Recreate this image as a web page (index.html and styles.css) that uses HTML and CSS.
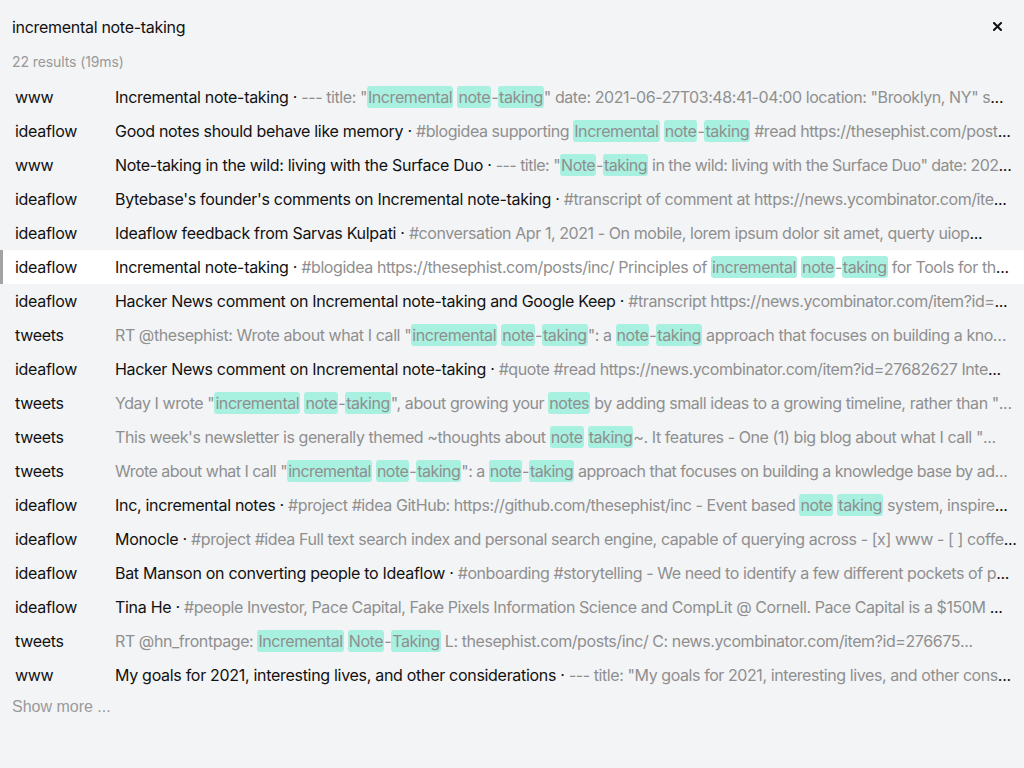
FILE: index.html
```html
<!DOCTYPE html>
<html>
<head>
<meta charset="utf-8">
<title>Search</title>
<link rel="stylesheet" href="styles.css">
</head>
<body>
<div class="search">
  <div class="search-head">
    <div class="query">incremental note-taking</div>
    <button class="close" aria-label="Close">
      <svg width="9" height="9" viewBox="0 0 9 9"><path d="M1 1L8 8M8 1L1 8" stroke="#111" stroke-width="2" stroke-linecap="square"/></svg>
    </button>
  </div>
  <div class="meta">22 results (19ms)</div>
  <ul class="results">
    <li class="row"><span class="src">www</span><span class="text"><span class="title">Incremental note-taking · </span><span class="body">--- title: "<mark>Incremental</mark> <mark>note</mark>-<mark>taking</mark>" date: 2021-06-27T03:48:41-04:00 location: "Brooklyn, NY" s</span>...</span></li>
    <li class="row"><span class="src">ideaflow</span><span class="text"><span class="title">Good notes should behave like memory · </span><span class="body">#blogidea supporting <mark>Incremental</mark> <mark>note</mark>-<mark>taking</mark> #read https://thesephist.com/post</span>...</span></li>
    <li class="row tight"><span class="src">www</span><span class="text"><span class="title">Note-taking in the wild: living with the Surface Duo · </span><span class="body">--- title: "<mark>Note</mark>-<mark>taking</mark> in the wild: living with the Surface Duo" date: 202</span>...</span></li>
    <li class="row"><span class="src">ideaflow</span><span class="text"><span class="title">Bytebase's founder's comments on Incremental note-taking · </span><span class="body">#transcript of comment at https://news.ycombinator.com/ite</span>...</span></li>
    <li class="row"><span class="src">ideaflow</span><span class="text"><span class="title">Ideaflow feedback from Sarvas Kulpati · </span><span class="body">#conversation Apr 1, 2021 - On mobile, lorem ipsum dolor sit amet, querty uiop</span>...</span></li>
    <li class="row selected"><span class="src">ideaflow</span><span class="text"><span class="title">Incremental note-taking · </span><span class="body">#blogidea https://thesephist.com/posts/inc/ Principles of <mark>incremental</mark> <mark>note</mark>-<mark>taking</mark> for Tools for th</span>...</span></li>
    <li class="row"><span class="src">ideaflow</span><span class="text"><span class="title">Hacker News comment on Incremental note-taking and Google Keep · </span><span class="body">#transcript https://news.ycombinator.com/item?id=</span>...</span></li>
    <li class="row"><span class="src">tweets</span><span class="text muted"><span class="body">RT @thesephist: Wrote about what I call "<mark>incremental</mark> <mark>note</mark>-<mark>taking</mark>": a <mark>note</mark>-<mark>taking</mark> approach that focuses on building a know</span>...</span></li>
    <li class="row"><span class="src">ideaflow</span><span class="text"><span class="title">Hacker News comment on Incremental note-taking · </span><span class="body">#quote #read https://news.ycombinator.com/item?id=27682627 Inte</span>...</span></li>
    <li class="row"><span class="src">tweets</span><span class="text muted"><span class="body">Yday I wrote "<mark>incremental</mark> <mark>note</mark>-<mark>taking</mark>", about growing your <mark>notes</mark> by adding small ideas to a growing timeline, rather than "</span>...</span></li>
    <li class="row"><span class="src">tweets</span><span class="text muted"><span class="body">This week's newsletter is generally themed ~thoughts about <mark>note</mark> <mark>taking</mark>~. It features - One (1) big blog about what I call "</span>...</span></li>
    <li class="row tight"><span class="src">tweets</span><span class="text muted"><span class="body">Wrote about what I call "<mark>incremental</mark> <mark>note</mark>-<mark>taking</mark>": a <mark>note</mark>-<mark>taking</mark> approach that focuses on building a knowledge base by ad</span>...</span></li>
    <li class="row"><span class="src">ideaflow</span><span class="text"><span class="title">Inc, incremental notes · </span><span class="body">#project #idea GitHub: https://github.com/thesephist/inc - Event based <mark>note</mark> <mark>taking</mark> system, inspire</span>...</span></li>
    <li class="row"><span class="src">ideaflow</span><span class="text"><span class="title">Monocle · </span><span class="body">#project #idea Full text search index and personal search engine, capable of querying across - [x] www - [ ] coffe</span>...</span></li>
    <li class="row"><span class="src">ideaflow</span><span class="text"><span class="title">Bat Manson on converting people to Ideaflow · </span><span class="body">#onboarding #storytelling - We need to identify a few different pockets of p</span>...</span></li>
    <li class="row"><span class="src">ideaflow</span><span class="text"><span class="title">Tina He · </span><span class="body">#people Investor, Pace Capital, Fake Pixels Information Science and CompLit @ Cornell. Pace Capital is a $150M </span>...</span></li>
    <li class="row"><span class="src">tweets</span><span class="text muted"><span class="body">RT @hn_frontpage: <mark>Incremental</mark> <mark>Note</mark>-<mark>Taking</mark> L: thesephist.com/posts/inc/ C: news.ycombinator.com/item?id=276675</span>...</span></li>
    <li class="row"><span class="src">www</span><span class="text"><span class="title">My goals for 2021, interesting lives, and other considerations · </span><span class="body">--- title: "My goals for 2021, interesting lives, and other cons</span>...</span></li>
  </ul>
  <button class="more">Show more ...</button>
</div>
</body>
</html>
```

FILE: styles.css
```css
* { box-sizing: border-box; }
html, body {
  margin: 0;
  padding: 0;
  background: #f3f4f6;
}
body {
  font-family: Inter, "Noto Sans", "Liberation Sans", sans-serif;
  color: #111;
  font-size: 16px;
  letter-spacing: -0.3px;
}
.search {
  display: flex;
  flex-direction: column;
}
.search-head {
  display: flex;
  align-items: center;
  justify-content: space-between;
  padding: 16px 22px 0 12px;
  height: 38px;
}
.query {
  font-size: 16px;
  line-height: 22px;
}
.close {
  border: 0;
  background: none;
  padding: 0;
  width: 9px;
  height: 9px;
  display: flex;
  margin-top: -1px;
}
.meta {
  margin-top: 14px;
  padding-left: 12px;
  font-size: 14px;
  line-height: 20px;
  letter-spacing: -0.1px;
  color: #999;
}
.results {
  list-style: none;
  margin: 8px 0 0;
  padding: 0;
}
.row {
  display: flex;
  height: 34px;
  line-height: 34px;
  border-left: 3px solid transparent;
  padding-left: 12px;
  padding-right: 7px;
}
.row.selected {
  background: #fff;
  border-left-color: #a3a3a3;
}
.src {
  flex: 0 0 100px;
  white-space: nowrap;
}
.text {
  flex: 1;
  min-width: 0;
  white-space: nowrap;
  overflow: hidden;
  text-overflow: ellipsis;
  color: #111;
}
.text.muted {
  color: #8f8f8f;
}
.body {
  color: #8f8f8f;
  letter-spacing: -0.42px;
}
.row.tight .body {
  letter-spacing: -0.52px;
}
mark {
  background: #a8f1e1;
  color: inherit;
  border-radius: 3px;
  padding: 1px 1px;
}
.more {
  align-self: flex-start;
  border: 0;
  background: none;
  padding: 0 12px;
  font-family: "Liberation Sans", Arial, sans-serif;
  font-size: 16px;
  letter-spacing: 0;
  line-height: 28px;
  margin-top: 1px;
  color: #9a9a9a;
}
```
